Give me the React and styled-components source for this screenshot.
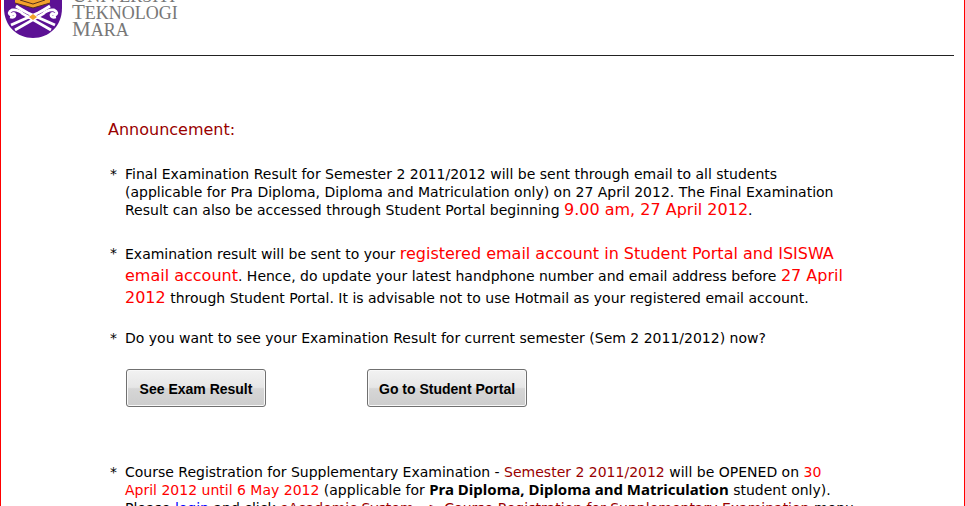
import React from "react";
import styled, { createGlobalStyle } from "styled-components";

const GlobalStyle = createGlobalStyle`
  * { box-sizing: border-box; }
  body { margin: 0; background: #fff; }
`;

const Page = styled.div`
  height: 100vh;
  overflow: hidden;
  border: solid #f00;
  border-width: 0 1px;
  color: #000;
  font: 14px/18px "DejaVu Sans", Verdana, sans-serif;
`;

const Header = styled.header`
  display: flex;
  align-items: flex-end;
  gap: 8px;
  height: 40px;
  padding-left: 1px;
  overflow: hidden;
`;

const Emblem = styled.svg`
  display: block;
  width: 62px;
  height: 40px;
`;

const Wordmark = styled.div`
  display: flex;
  flex-direction: column;
  padding-bottom: 2px;
  color: #777;
  font: 18px/17px "Liberation Serif", serif;
  text-transform: uppercase;
`;

const Word = styled.div`
  height: 17px;

  &::first-letter {
    font-size: 21px;
    line-height: 17px;
  }
`;

const Rule = styled.hr`
  height: 1px;
  margin: 15px 10px 0 9px;
  border: 0;
  background: #222;
`;

const Main = styled.main`
  padding: 64px 100px 0 107px;
`;

const Title = styled.h1`
  margin: 0 0 25px;
  color: #900;
  font-size: 16px;
  font-weight: 400;
  line-height: 20px;
`;

const Notices = styled.ul`
  margin: 0;
  padding: 0;
  list-style: none;
`;

const Notice = styled.li`
  display: flex;
  gap: 8px;
  margin-bottom: ${(p) => p.$gap || 22}px;
  line-height: ${(p) => p.$leading || 18}px;
  white-space: nowrap;

  &::before {
    content: "*";
    width: 9px;
    text-align: right;
  }
`;

const Body = styled.div`
  b {
    font-family: "Noto Sans", sans-serif;
    font-size: 15px;
    line-height: 1;
  }
`;

const Strong = styled.span`
  color: #f00;
  font-size: 16px;
`;

const Date = styled.span`
  color: #f00;
`;

const Term = styled.span`
  color: #900;
`;

const Link = styled.a`
  color: #00f;
`;

const Actions = styled.div`
  display: flex;
  gap: 101px;
  margin: 0 0 56px 18px;
`;

const Button = styled.button`
  min-width: 140px;
  height: 38px;
  padding: 2px 11px 0;
  border: 1px solid #707070;
  border-radius: 3px;
  background: linear-gradient(#f2f2f2, #e6e6e6 48%, #d6d6d6 52%, #cdcdcd);
  box-shadow: inset 0 0 0 1px #f8f8f8;
  color: #000;
  font: bold 14px "Liberation Sans", Arial, sans-serif;
`;

export default function App() {
  return (
    <>
      <GlobalStyle />
      <Page>
        <Header>
          <Emblem viewBox="2 0 62 40" role="img" aria-label="Universiti Teknologi Mara emblem">
            <path d="M4 0H62V8C62 26 49 38 33 38S4 26 4 8Z" fill="#5c1194" />
            <path d="M15 0V3L33 8L50 3V0Z" fill="#f2a12c" />
            <path d="M20 0L33 4L45 0M15 3L33 8L50 3" fill="none" stroke="#54301c" strokeWidth="1" />
            <g fill="none" stroke="#fff">
              <path d="M16 6Q22 10 28 13L55 25" strokeWidth="3" />
              <path d="M50 6Q44 10 38 13L11 25" strokeWidth="3" />
              <path d="M10 17Q15 18 15 15Q14 12 11 15Q7 13 12 10Q18 9 23 14L51 30" strokeWidth="2.8" />
              <path d="M56 17Q51 18 51 15Q52 12 55 15Q59 13 54 10Q48 9 43 14L15 30" strokeWidth="2.8" />
            </g>
            <path d="M29 17L33 14L37 17L33 20Z" fill="#f2a12c" />
          </Emblem>
          <Wordmark>
            <Word>Universiti</Word>
            <Word>Teknologi</Word>
            <Word>Mara</Word>
          </Wordmark>
        </Header>
        <Rule />
        <Main>
          <Title>Announcement:</Title>
          <Notices>
            <Notice $gap={24}>
              <Body>
                Final Examination Result for Semester 2 2011/2012 will be sent through email to all students
                <br />
                (applicable for Pra Diploma, Diploma and Matriculation only) on 27 April 2012. The Final Examination
                <br />
                Result can also be accessed through Student Portal beginning <Strong>9.00 am, 27 April 2012</Strong>.
              </Body>
            </Notice>
            <Notice $leading={21} $gap={20}>
              <Body>
                Examination result will be sent to your{" "}
                <Strong>
                  registered email account in Student Portal and ISISWA
                  <br />
                  email account
                </Strong>
                . Hence, do update your latest handphone number and email address before{" "}
                <Strong>
                  27 April
                  <br />
                  2012
                </Strong>{" "}
                through Student Portal. It is advisable not to use Hotmail as your registered email account.
              </Body>
            </Notice>
            <Notice>
              <Body>Do you want to see your Examination Result for current semester (Sem 2 2011/2012) now?</Body>
            </Notice>
          </Notices>
          <Actions>
            <Button type="button">See Exam Result</Button>
            <Button type="button">Go to Student Portal</Button>
          </Actions>
          <Notices>
            <Notice>
              <Body>
                Course Registration for Supplementary Examination - <Term>Semester 2 2011/2012</Term> will be OPENED on{" "}
                <Date>
                  30
                  <br />
                  April 2012 until 6 May 2012
                </Date>{" "}
                (applicable for <b>Pra Diploma, Diploma and Matriculation</b> student only).
                <br />
                Please <Link href="#login">login</Link> and click{" "}
                <Term>eAcademic System --&gt; Course Registration for Supplementary Examination</Term> menu
              </Body>
            </Notice>
          </Notices>
        </Main>
      </Page>
    </>
  );
}
